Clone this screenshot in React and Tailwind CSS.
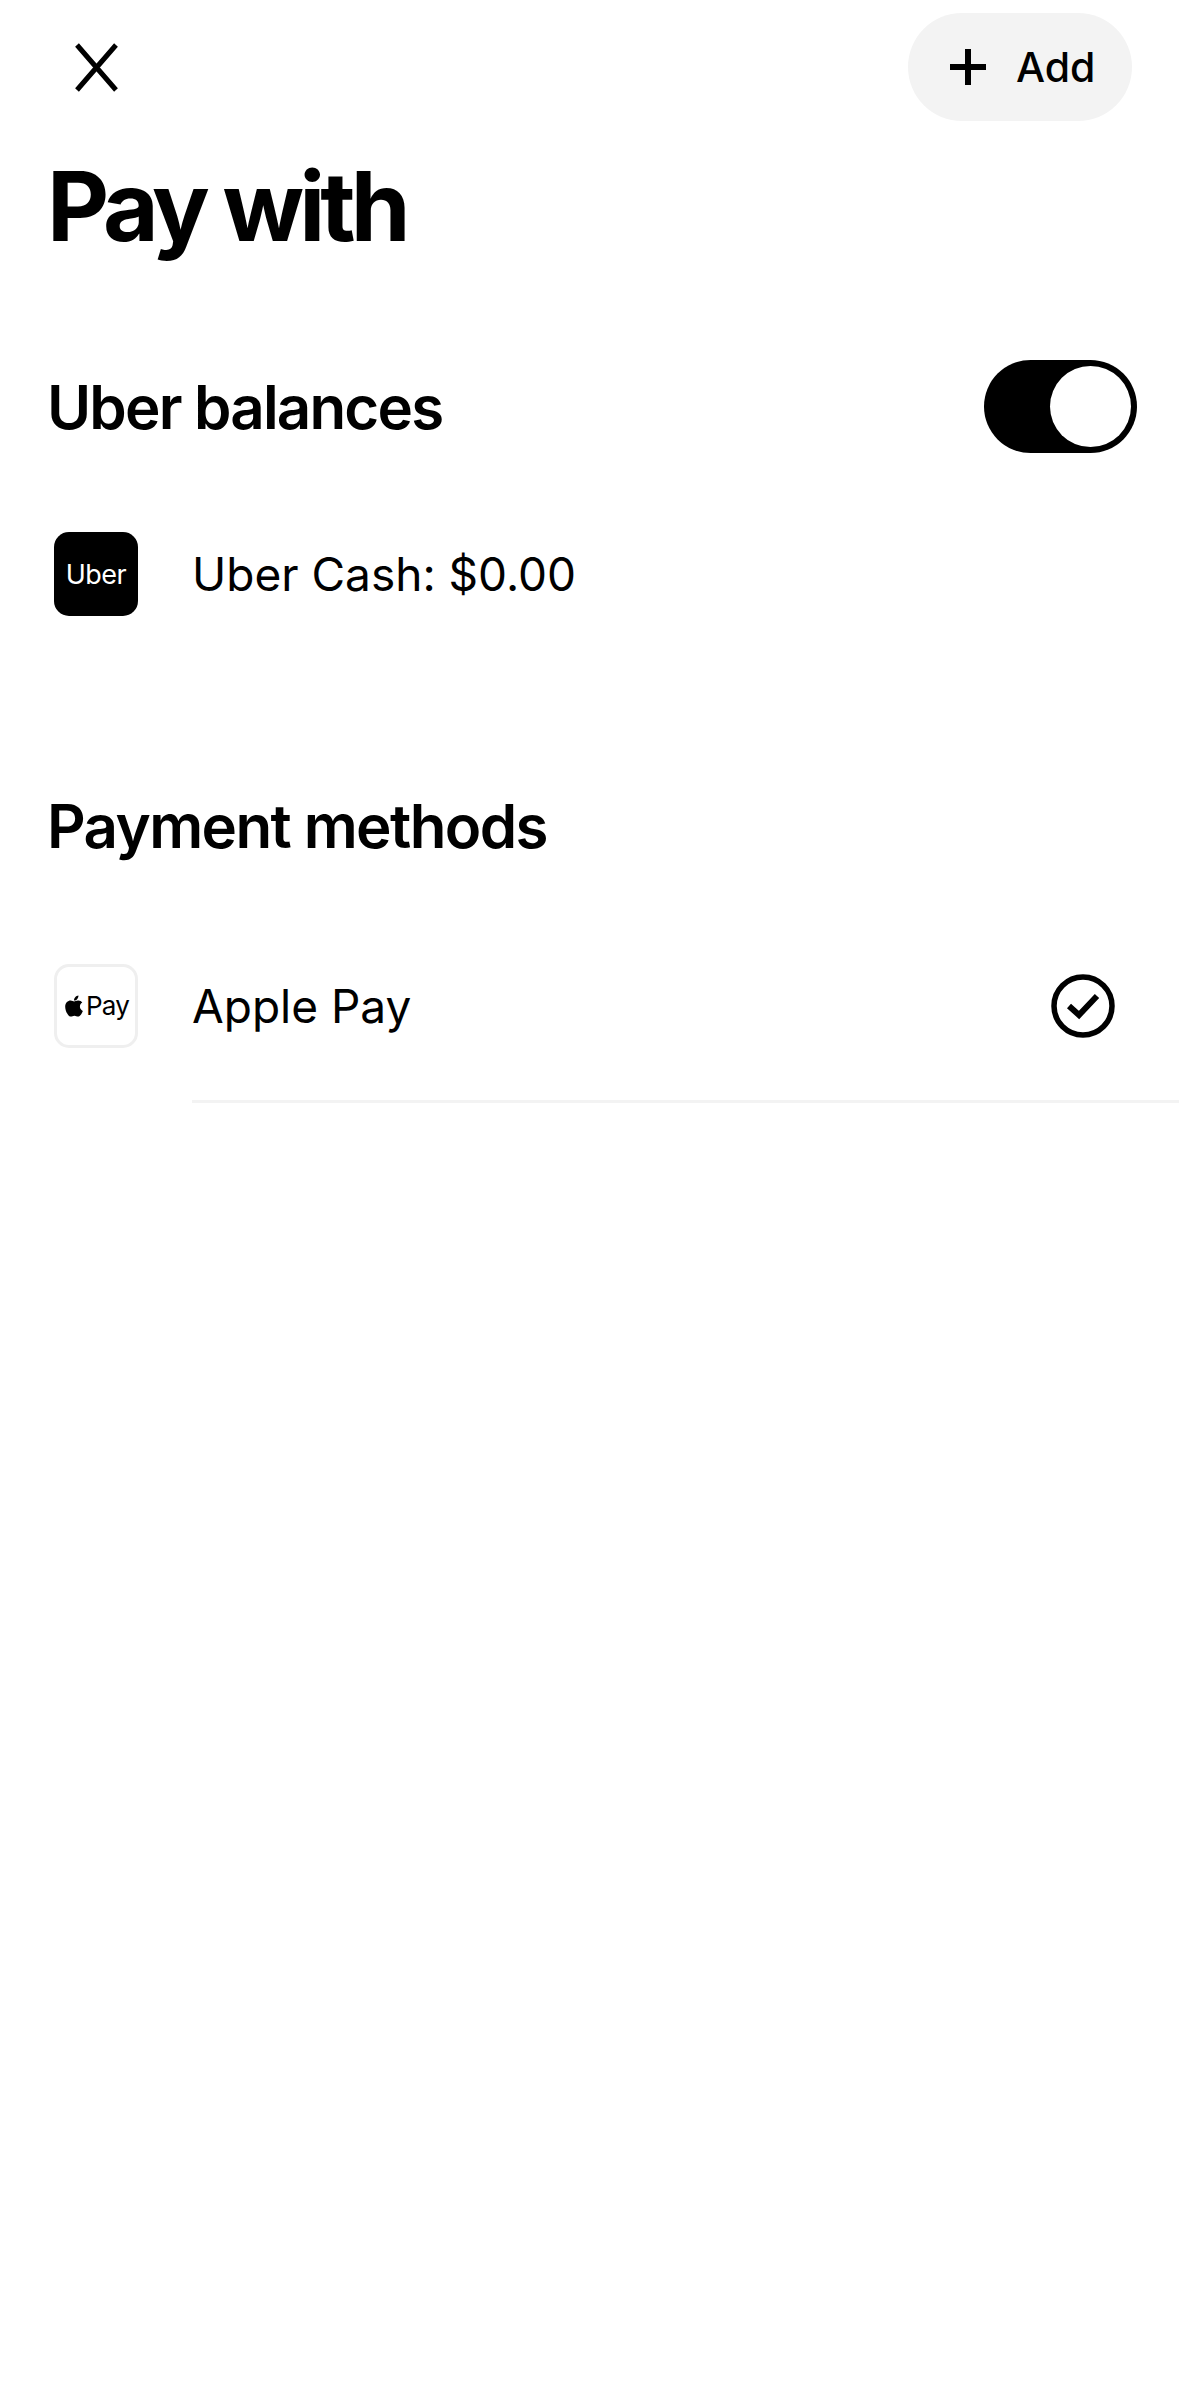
import { FaApple } from "react-icons/fa";

const Row = ({ icon, label, right }) => (
  <div className="flex items-center">
    <div className="w-[192px] pl-[54px] shrink-0">{icon}</div>
    <div className="flex-1 flex items-center justify-between pr-[64px]">
      <span className="text-[46px] leading-[56px] text-black">{label}</span>
      {right}
    </div>
  </div>
);

const App = () => {
  return (
    <div className="w-[1179px] h-[2396px] bg-white text-black font-['Inter',sans-serif] overflow-hidden">
      {/* top bar */}
      <div className="flex items-center justify-between pt-[13px] pl-[75px] pr-[47px]">
        <button className="w-[43px] h-[49px]">
          <svg viewBox="0 0 43 49" className="w-[43px] h-[49px]" fill="none" stroke="black" strokeWidth="5">
            <path d="M2 2 L41 47 M41 2 L2 47" />
          </svg>
        </button>
        <button className="flex items-center h-[108px] w-[224px] pl-[42px] rounded-full bg-[#f3f3f3]">
          <svg viewBox="0 0 36 36" className="w-[36px] h-[36px]" fill="black">
            <path d="M15 0h6v15h15v6H21v15h-6V21H0v-6h15z" />
          </svg>
          <span className="ml-[30px] text-[41px] leading-[50px] font-medium">Add</span>
        </button>
      </div>

      <h1 className="mt-[25px] pl-[47px] text-[96px] leading-[120px] font-bold tracking-[-5px]">Pay with</h1>

      {/* balances */}
      <div className="mt-[94px] flex items-center justify-between pl-[47px] pr-[42px]">
        <h2 className="text-[60px] leading-[72px] font-semibold tracking-[-1.8px]">Uber balances</h2>
        <div className="w-[153px] h-[93px] rounded-full bg-black flex items-center justify-end pr-[6px]">
          <div className="w-[81px] h-[81px] rounded-full bg-white" />
        </div>
      </div>

      <div className="mt-[79px]">
        <Row
          label="Uber Cash: $0.00"
          icon={
            <div className="w-[84px] h-[84px] rounded-[15px] bg-black flex items-center justify-center">
              <span className="text-white text-[27px] leading-none tracking-[-0.5px]">Uber</span>
            </div>
          }
        />
      </div>

      {/* payment methods */}
      <h2 className="mt-[174px] pl-[47px] text-[60px] leading-[72px] font-semibold tracking-[-1.6px]">Payment methods</h2>

      <div className="mt-[102px]">
        <Row
          label="Apple Pay"
          icon={
            <div className="w-[84px] h-[84px] rounded-[15px] border-[3px] border-[#efefef] bg-white flex items-center justify-center gap-[1px]">
              <FaApple className="w-[22px] h-[24px]" />
              <span className="text-[26px] leading-none tracking-[-0.8px]">Pay</span>
            </div>
          }
          right={
            <svg viewBox="0 0 64 64" className="w-[64px] h-[64px]" fill="none" stroke="black">
              <circle cx="32" cy="32" r="29" strokeWidth="5.5" />
              <path d="M18 32 L28 41 L46 22" strokeWidth="6" />
            </svg>
          }
        />
      </div>
      <div className="mt-[52px] ml-[192px] h-[3px] bg-[#f3f3f3]" />
    </div>
  );
};

export default App;
